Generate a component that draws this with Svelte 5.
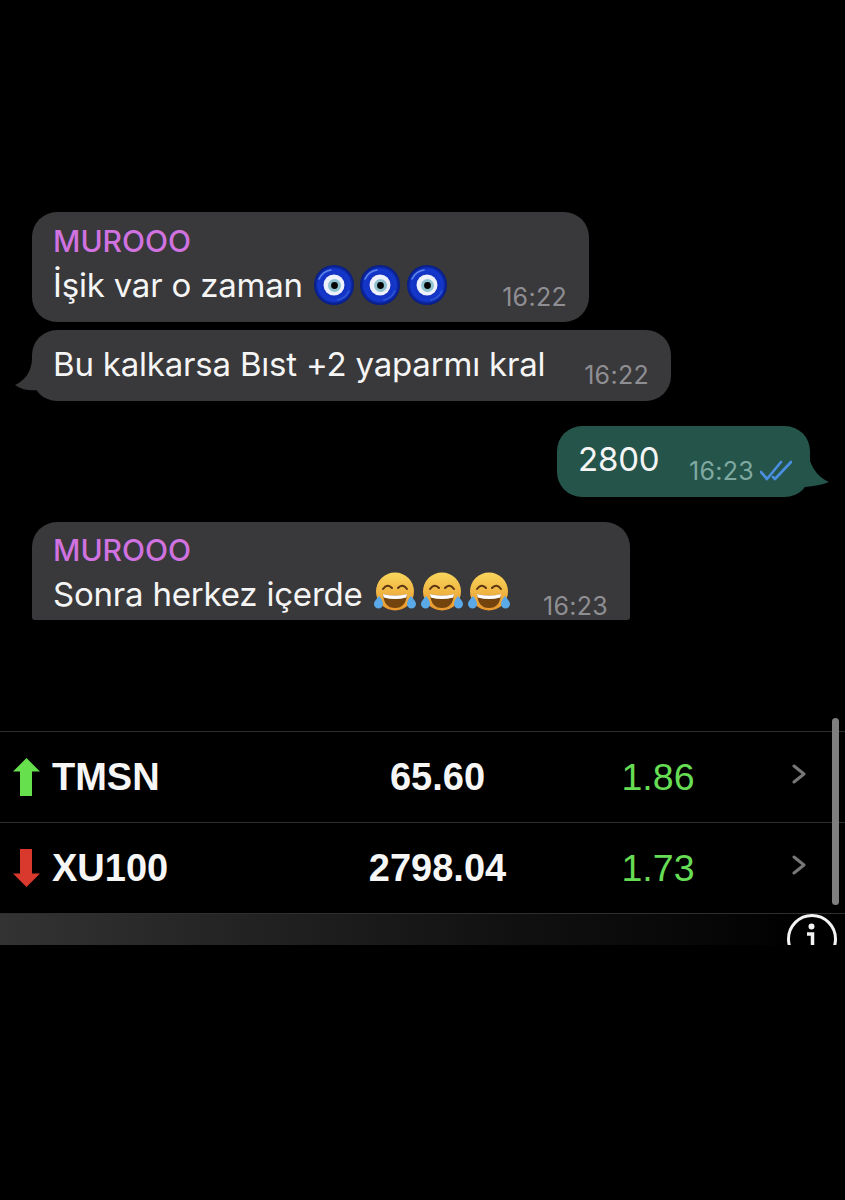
<script>
  const stocks = [
    { name: 'TMSN', price: '65.60', change: '1.86', up: true },
    { name: 'XU100', price: '2798.04', change: '1.73', up: false }
  ];
</script>

{#snippet nazar()}
  <svg class="emoji" viewBox="0 0 40 40" aria-hidden="true">
    <circle cx="20" cy="20" r="20" fill="#081f8c" />
    <circle cx="20" cy="20" r="18.5" fill="url(#nz)" />
    <path d="M5 14a16 16 0 0 1 12-9" stroke="#5f86e8" stroke-width="1.6" fill="none" stroke-linecap="round" />
    <path d="M35 26a16 16 0 0 1-11 9" stroke="#2f58d4" stroke-width="1.6" fill="none" stroke-linecap="round" />
    <circle cx="20" cy="20" r="10.500" fill="#eef1fb" />
    <circle cx="20.500" cy="20.500" r="6.500" fill="#8fc3cf" />
    <circle cx="20.500" cy="20.500" r="3.400" fill="#050505" />
  </svg>
{/snippet}

{#snippet laugh()}
  <svg class="emoji laugh" viewBox="0 0 42 40" aria-hidden="true">
    <circle cx="21" cy="19.500" r="19" fill="url(#lg)" />
    <path d="M9 17q4.500-6 9-1M33 17q-4.500-6-9-1" stroke="#5a3310" stroke-width="2" fill="none" stroke-linecap="round" />
    <path d="M9 22q12 3 24 0q-1 14-12 14t-12-14z" fill="#74440f" />
    <path d="M9 22q12 3 24 0l-.7 3.500q-11.300 3-22.600 0z" fill="#fff" />
    <path d="M5 24c-2 3-5 5-5 8a4.500 4.500 0 0 0 9 0c0-3-2-6-4-8zM37 24c2 3 5 5 5 8a4.500 4.500 0 0 1-9 0c0-3 2-6 4-8z" fill="#5aa9e8" />
  </svg>
{/snippet}

<svg class="defs" aria-hidden="true">
  <defs>
    <radialGradient id="nz" cx="0.5" cy="0.5" r="0.5">
      <stop offset="0.6" stop-color="#1232c2" />
      <stop offset="0.85" stop-color="#1538cc" />
      <stop offset="1" stop-color="#0a2398" />
    </radialGradient>
    <linearGradient id="lg" x1="0" y1="0" x2="0" y2="1">
      <stop offset="0" stop-color="#f9d65c" />
      <stop offset="1" stop-color="#e8962c" />
    </linearGradient>
  </defs>
</svg>

<main class="page">
  <section class="chat">
    <article class="bubble first">
      <div class="body">
        <div class="sender">MUROOO</div>
        <div class="text">İşik var o zaman <span class="emojis nz">{@render nazar()}{@render nazar()}{@render nazar()}</span></div>
      </div>
      <time>16:22</time>
    </article>

    <article class="bubble second">
      <svg class="tail left" viewBox="0 0 32 44" aria-hidden="true"><path d="M18 1C18 13 12 23 1 28C8 33 16 34 24 33L31 23V1z" fill="#39383a" /></svg>
      <div class="body"><div class="text">Bu kalkarsa Bıst +2 yaparmı kral</div></div>
      <time>16:22</time>
    </article>

    <article class="bubble own">
      <div class="body"><div class="text">2800</div></div>
      <div class="meta">
        <time>16:23</time>
        <svg class="ticks" viewBox="0 0 32 22" aria-hidden="true">
          <path d="M1 12l6 7L21 2M13 17l2 2L31 2" fill="none" stroke="#4a8ee0" stroke-width="2.700" stroke-linecap="round" stroke-linejoin="round" />
        </svg>
      </div>
      <svg class="tail right" viewBox="0 0 32 50" aria-hidden="true"><path d="M10 3C11 18 19 30 31 35C24 38 16 39 7 40L0 30V3z" fill="#24544a" /></svg>
    </article>

    <article class="bubble last">
      <div class="body">
        <div class="sender">MUROOO</div>
        <div class="text">Sonra herkez içerde <span class="emojis lg">{@render laugh()}{@render laugh()}{@render laugh()}</span></div>
      </div>
      <time>16:23</time>
    </article>
  </section>

  <section class="board">
    {#each stocks as s}
      <div class="row">
        <div class="symbol">
          <svg class="arrow" viewBox="0 0 27 38" aria-hidden="true">
            {#if s.up}
              <path d="M13.500 0L27 13.500H19V38H7V13.500H0z" fill="#66e04c" />
            {:else}
              <path d="M13.500 38L27 24.500H19V0H7V24.500H0z" fill="#d9382c" />
            {/if}
          </svg>
          <span>{s.name}</span>
        </div>
        <div class="price">{s.price}</div>
        <div class="change">{s.change}</div>
        <svg class="chev" viewBox="0 0 14 20" aria-hidden="true"><path d="M2 2l10 8-10 8" fill="none" stroke="#777" stroke-width="3" stroke-linecap="round" stroke-linejoin="round" /></svg>
      </div>
    {/each}
    <div class="scrollbar"></div>
  </section>
  <div class="footer">
    <svg class="info" viewBox="0 0 50 31" aria-hidden="true">
      <circle cx="25" cy="25" r="23.500" fill="none" stroke="#f4f4f4" stroke-width="3" />
      <circle cx="24.500" cy="12.500" r="3" fill="#f4f4f4" />
      <path d="M20 20h5.500v12" fill="none" stroke="#f4f4f4" stroke-width="3.500" />
    </svg>
  </div>
</main>

<style>
  :global(body) {
    margin: 0;
    background: #000;
  }
  .defs {
    position: absolute;
    width: 0;
    height: 0;
  }
  .page {
    width: 845px;
    height: 1200px;
    background: #000;
    overflow: hidden;
    display: flex;
    flex-direction: column;
    font-family: Inter, "Liberation Sans", sans-serif;
  }
  .chat {
    padding: 212px 0 0 32px;
    height: 731px;
    flex: none;
    box-sizing: border-box;
    display: flex;
    flex-direction: column;
    align-items: flex-start;
  }
  .bubble {
    position: relative;
    flex: none;
    box-sizing: border-box;
    display: flex;
    justify-content: space-between;
    align-items: flex-end;
    background: #39383a;
    border-radius: 25px;
    padding: 0 22px 0 21px;
    color: #f5f5f5;
  }
  .body { align-self: flex-start; }
  .sender {
    color: #d072e0;
    font-size: 30px;
    line-height: 34px;
    font-weight: 500;
    margin-bottom: 5px;
  }
  .text {
    font-size: 33px;
    line-height: 44px;
    letter-spacing: -0.2px;
    display: flex;
    align-items: center;
    white-space: pre;
  }
  time {
    font-size: 25px;
    line-height: 30px;
    color: #8e8e93;
    letter-spacing: 0.3px;
  }
  .first {
    width: 557px;
    height: 110px;
    padding-top: 12px;
    margin-bottom: 8px;
  }
  .first time { margin-bottom: 10px; }
  .second {
    width: 639px;
    height: 71px;
    padding-top: 12px;
    margin-bottom: 25px;
  }
  .second time { margin-bottom: 11px; }
  .own {
    width: 253px;
    height: 71px;
    padding: 11px 18px 0 21px;
    margin: 0 0 25px 525px;
    background: #24544a;
  }
  .own time { color: #7fa9a0; }
  .meta {
    display: flex;
    align-items: center;
    gap: 6px;
    margin-bottom: 11px;
  }
  .ticks {
    width: 32px;
    height: 22px;
  }
  .last {
    width: 598px;
    height: 98px;
    padding-top: 11px;
    border-radius: 25px 25px 3px 3px;
  }
  .last time { margin-bottom: -1px; }
  .tail {
    position: absolute;
    bottom: 0;
    width: 32px;
    height: 44px;
  }
  .tail.left { left: -18px; }
  .tail.right { right: -20px; height: 50px; }
  .emojis {
    display: inline-flex;
    align-items: center;
    margin-left: 2px;
  }
  .emojis.nz { gap: 6.500px; }
  .emojis.lg {
    gap: 5px;
    margin-top: -4px;
  }
  .emoji {
    width: 40px;
    height: 40px;
    display: block;
  }
  .emoji.laugh { width: 42px; }

  .board {
    position: relative;
    border-top: 1px solid #2e2e2e;
    font-family: "Liberation Sans", Arial, sans-serif;
  }
  .row {
    display: grid;
    grid-template-columns: 335px 205px 240px 1fr;
    align-items: center;
    height: 90px;
    border-bottom: 1px solid #2e2e2e;
    color: #f6f6f6;
  }
  .row:last-of-type {
    border-bottom: 2px solid;
    border-image: linear-gradient(90deg, #444, #2a2a2a) 1;
  }
  .symbol {
    display: flex;
    align-items: center;
    gap: 12px;
    padding-left: 13px;
    font-weight: 700;
    font-size: 38px;
  }
  .arrow {
    width: 27px;
    height: 38px;
  }
  .price {
    text-align: center;
    font-weight: 700;
    font-size: 38px;
  }
  .change {
    text-align: center;
    padding-right: 4px;
    font-size: 37.500px;
    color: #67dd55;
    justify-self: center;
  }
  .chev {
    width: 14px;
    height: 20px;
    margin: -6px 0 0 12px;
  }
  .scrollbar {
    position: absolute;
    left: 832px;
    top: -14px;
    width: 7px;
    height: 187px;
    border-radius: 3.500px;
    background: #7f7f7f;
  }
  .footer {
    position: relative;
    height: 31px;
    flex: none;
    background: linear-gradient(90deg, #333 0%, #222 30%, #111 60%, #060606 85%, #000 95%);
    overflow: hidden;
  }
  .info {
    position: absolute;
    left: 787px;
    top: 0;
    width: 50px;
    height: 31px;
  }
</style>
